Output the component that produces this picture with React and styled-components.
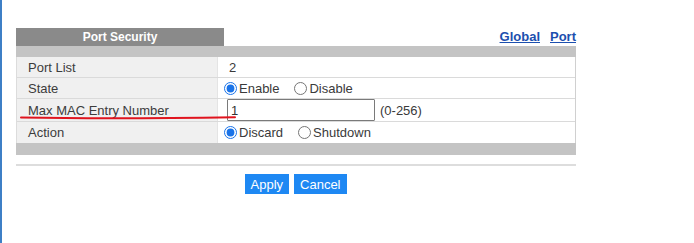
import React from 'react'
import styled, { createGlobalStyle } from 'styled-components'

const GlobalStyle = createGlobalStyle`
  html, body {
    margin : 0;
    padding : 0;
    background : #ffffff;
  }
  body {
    font-family : "Liberation Sans", Arial, sans-serif;
    font-size : 13px;
    color : #3a3a3a;
  }
`

const Page = styled.div`
  position : relative;
  min-height : 100vh;
  box-sizing : border-box;
  border-left : 2px solid #3d7fc6;
  padding : 28px 0 0 14px;
  overflow : hidden;
`

const Panel = styled.div`
  width : 560px;
`

const TitleBar = styled.div`
  display : flex;
  align-items : flex-end;
  height : 18px;
`

const Tab = styled.div`
  width : 208px;
  height : 18px;
  line-height : 18px;
  background : #8a8a8a;
  color : #ffffff;
  font-weight : bold;
  font-size : 12px;
  text-align : center;
`

const Links = styled.div`
  margin-left : auto;
  display : flex;
  gap : 10px;
  white-space : nowrap;
  line-height : 16px;
  padding-bottom : 1px;
`

const Link = styled.a`
  color : #1c4fae;
  font-weight : bold;
  font-size : 13px;
  text-decoration : underline;
  cursor : pointer;
`

const Band = styled.div`
  height : ${p => p.h}px;
  background : #c4c4c4;
`

const Table = styled.div`
  border-right : 1px solid #d0d0d0;
  border-left : 1px solid #dcdcdc;
`

const Row = styled.div`
  display : grid;
  grid-template-columns : 201px 1fr;
  min-height : ${p => p.h || 20}px;
  border-bottom : 1px solid #dadada;
  &:last-child {
    border-bottom : none;
  }
`

const Label = styled.div`
  background : #f0f0f0;
  display : flex;
  align-items : center;
  padding-left : 11px;
  border-right : 1px solid #e4e4e4;
  color : #3c3c3c;
`

const Value = styled.div`
  display : flex;
  align-items : center;
  padding-left : ${p => p.pad ?? 11}px;
  gap : 4px;
`

const Choice = styled.label`
  display : flex;
  align-items : center;
  margin-right : 8px;
`

const Radio = styled.input`
  width : 13px;
  height : 13px;
  margin : 0 2px 0 3px;
  accent-color : #1a73e8;
`

const NumberInput = styled.input`
  width : 148px;
  height : 22px;
  box-sizing : border-box;
  border : 1px solid #7a7a7a;
  border-radius : 1px;
  padding : 0 3px;
  font-family : "Liberation Sans", Arial, sans-serif;
  font-size : 13px;
  color : #333;
  outline : none;
`

const Hint = styled.span`
  margin-left : 1px;
  color : #3a3a3a;
`

const Divider = styled.div`
  margin-top : 9px;
  height : 2px;
  background : #dddddd;
`

const Buttons = styled.div`
  display : flex;
  justify-content : center;
  gap : 5px;
  margin-top : 8px;
  padding-right : 1px;
`

const Button = styled.button`
  height : 20px;
  padding : 0 ${p => p.pad}px;
  border : none;
  background : #1e88f3;
  color : #ffffff;
  font-family : "Liberation Sans", Arial, sans-serif;
  font-size : 13px;
  cursor : pointer;
`

const Marker = styled.svg`
  position : absolute;
  left : 0;
  top : 0;
  pointer-events : none;
`

const App = () => {
  return (
    <>
      <GlobalStyle />
      <Page>
        <Panel>
          <TitleBar>
            <Tab>Port Security</Tab>
            <Links>
              <Link>Global</Link>
              <Link>Port</Link>
            </Links>
          </TitleBar>
          <Band h={11} />
          <Table>
            <Row h={20}>
              <Label>Port List</Label>
              <Value>2</Value>
            </Row>
            <Row h={20}>
              <Label>State</Label>
              <Value pad={3}>
                <Choice><Radio type="radio" name="state" defaultChecked />Enable</Choice>
                <Choice><Radio type="radio" name="state" />Disable</Choice>
              </Value>
            </Row>
            <Row h={22}>
              <Label>Max MAC Entry Number</Label>
              <Value pad={9}>
                <NumberInput defaultValue="1" />
                <Hint>(0-256)</Hint>
              </Value>
            </Row>
            <Row h={21}>
              <Label>Action</Label>
              <Value pad={3}>
                <Choice><Radio type="radio" name="action" defaultChecked />Discard</Choice>
                <Choice><Radio type="radio" name="action" />Shutdown</Choice>
              </Value>
            </Row>
          </Table>
          <Band h={12} />
          <Divider />
          <Buttons>
            <Button pad={6}>Apply</Button>
            <Button pad={6}>Cancel</Button>
          </Buttons>
        </Panel>
        <Marker width="694" height="243">
          <path d="M19 117.5 C 80 118.5, 180 118, 233 117.2" stroke="#e0141e" strokeWidth="2" fill="none" strokeLinecap="round" />
        </Marker>
      </Page>
    </>
  )
}

export default App
